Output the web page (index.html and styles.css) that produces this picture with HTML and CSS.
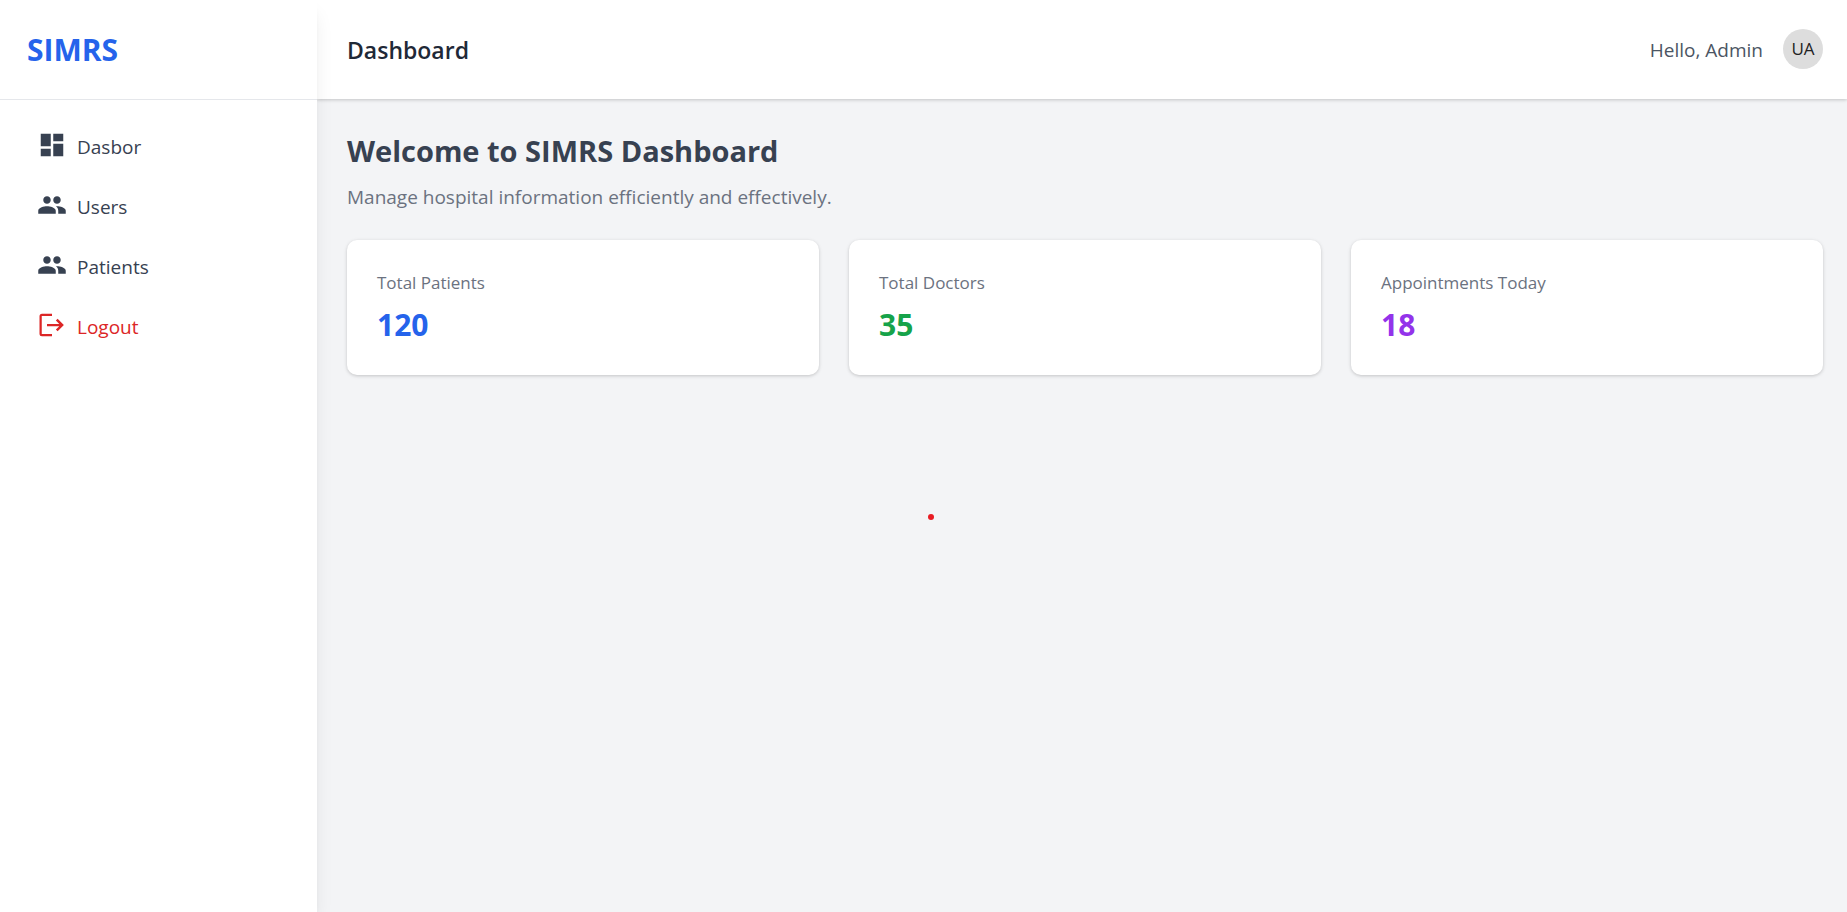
FILE: index.html
```html
<!DOCTYPE html>
<html lang="en">
<head>
<meta charset="utf-8">
<title>SIMRS Dashboard</title>
<link rel="stylesheet" href="styles.css">
</head>
<body>
<div class="layout">
  <aside class="sidebar">
    <div class="brand">SIMRS</div>
    <nav class="menu">
      <a class="menu-item" href="#">
        <svg class="icon" viewBox="0 0 24 24" aria-hidden="true"><path d="M3 13h8V3H3v10zm0 8h8v-6H3v6zm10 0h8V11h-8v10zm0-18v6h8V3h-8z"/></svg>
        <span>Dasbor</span>
      </a>
      <a class="menu-item" href="#">
        <svg class="icon" viewBox="0 0 24 24" aria-hidden="true"><path d="M16 11c1.66 0 2.99-1.34 2.99-3S17.66 5 16 5s-3 1.34-3 3 1.34 3 3 3zm-8 0c1.66 0 2.99-1.34 2.99-3S9.66 5 8 5 5 6.34 5 8s1.34 3 3 3zm0 2c-2.33 0-7 1.17-7 3.500V19h14v-2.500c0-2.330-4.670-3.500-7-3.500zm8 0c-.29 0-.62.02-.97.05 1.160.84 1.970 1.970 1.970 3.450V19h6v-2.500c0-2.330-4.670-3.500-7-3.500z"/></svg>
        <span>Users</span>
      </a>
      <a class="menu-item" href="#">
        <svg class="icon" viewBox="0 0 24 24" aria-hidden="true"><path d="M16 11c1.66 0 2.99-1.34 2.99-3S17.66 5 16 5s-3 1.34-3 3 1.34 3 3 3zm-8 0c1.66 0 2.99-1.34 2.99-3S9.66 5 8 5 5 6.34 5 8s1.34 3 3 3zm0 2c-2.33 0-7 1.17-7 3.500V19h14v-2.500c0-2.330-4.670-3.500-7-3.500zm8 0c-.29 0-.62.02-.97.05 1.160.84 1.970 1.970 1.970 3.450V19h6v-2.500c0-2.330-4.670-3.500-7-3.500z"/></svg>
        <span>Patients</span>
      </a>
      <a class="menu-item menu-item-danger" href="#">
        <svg class="icon" viewBox="0 0 24 24" aria-hidden="true"><path d="M4 3h8v1.800H3.800v14.400H12V21H4a2 2 0 0 1-2-2V5a2 2 0 0 1 2-2z"/><path d="M16.500 7l5 5-5 5-1.400-1.400 2.700-2.700H8v-1.800h9.800l-2.700-2.700z"/></svg>
        <span>Logout</span>
      </a>
    </nav>
  </aside>
  <div class="page">
    <header class="topbar">
      <h1 class="topbar-title">Dashboard</h1>
      <div class="user">
        <span class="greeting">Hello, Admin</span>
        <span class="avatar">UA</span>
      </div>
    </header>
    <main class="content">
      <h2 class="welcome">Welcome to SIMRS Dashboard</h2>
      <p class="lead">Manage hospital information efficiently and effectively.</p>
      <section class="cards">
        <article class="card"><h3 class="card-label">Total Patients</h3><p class="card-value blue">120</p></article>
        <article class="card"><h3 class="card-label">Total Doctors</h3><p class="card-value green">35</p></article>
        <article class="card"><h3 class="card-label">Appointments Today</h3><p class="card-value purple">18</p></article>
      </section>
    </main>
  </div>
</div>
<span class="pointer-dot"></span>
</body>
</html>
```
FILE: styles.css
```css
* { box-sizing: border-box; }
body {
  margin: 0;
  font-family: "Segoe UI", "Open Sans", "Noto Sans", sans-serif;
  font-size: 19px;
  line-height: 30px;
  background: #f3f4f6;
  color: #374151;
}
h1, h2, h3, p { margin: 0; font-weight: 400; }
.layout { display: flex; min-height: 100vh; }
.sidebar {
  position: relative;
  flex: 0 0 317px;
  background: #fff;
  box-shadow: 0 12px 19px -4px rgba(0, 0, 0, .1), 0 5px 8px -5px rgba(0, 0, 0, .1);
}
.brand {
  height: 100px;
  padding: 30px 27px;
  border-bottom: 1px solid #e5e7eb;
  font-size: 30px;
  line-height: 40px;
  font-weight: 700;
  color: #2563eb;
}
.menu { display: flex; flex-direction: column; gap: 10px; padding: 22px 22px; }
.menu-item {
  display: flex;
  align-items: center;
  gap: 10px;
  height: 50px;
  padding: 0 15px;
  border-radius: 8px;
  color: #374151;
  text-decoration: none;
}
.menu-item-danger { color: #dc2626; }
.icon { width: 30px; height: 30px; margin-bottom: 4px; fill: currentColor; }
.page { flex: 1; min-width: 0; }
.topbar {
  display: flex;
  justify-content: space-between;
  align-items: flex-start;
  height: 99px;
  padding: 29px 24px 29px 30px;
  background: #fff;
  box-shadow: 0 1px 4px rgba(0, 0, 0, .1), 0 1px 3px rgba(0, 0, 0, .1);
}
.topbar-title { font-size: 23px; line-height: 42px; font-weight: 600; color: #1f2937; }
.user { display: flex; align-items: flex-start; gap: 20px; }
.greeting { line-height: 42px; color: #4b5563; }
.avatar {
  width: 40px;
  height: 40px;
  border-radius: 50%;
  background: #ddd;
  color: #222;
  font-size: 17px;
  line-height: 40px;
  text-align: center;
}
.content { padding: 32px 24px 30px 30px; }
.welcome { font-size: 29px; line-height: 40px; font-weight: 700; }
.lead { margin-top: 11px; color: #6b7280; }
.cards { display: grid; grid-template-columns: repeat(3, 1fr); gap: 30px; margin-top: 28px; }
.card {
  padding: 30px;
  background: #fff;
  border-radius: 10px;
  box-shadow: 0 1px 4px rgba(0, 0, 0, .1), 0 1px 3px rgba(0, 0, 0, .1);
}
.card-label { font-size: 17px; line-height: 26px; color: #6b7280; }
.card-value { margin-top: 9px; font-size: 30px; line-height: 40px; font-weight: 700; }
.blue { color: #2563eb; }
.green { color: #16a34a; }
.purple { color: #9333ea; }
.pointer-dot {
  position: absolute;
  left: 928px;
  top: 514px;
  width: 6px;
  height: 6px;
  border-radius: 50%;
  background: #e81c23;
}
```
